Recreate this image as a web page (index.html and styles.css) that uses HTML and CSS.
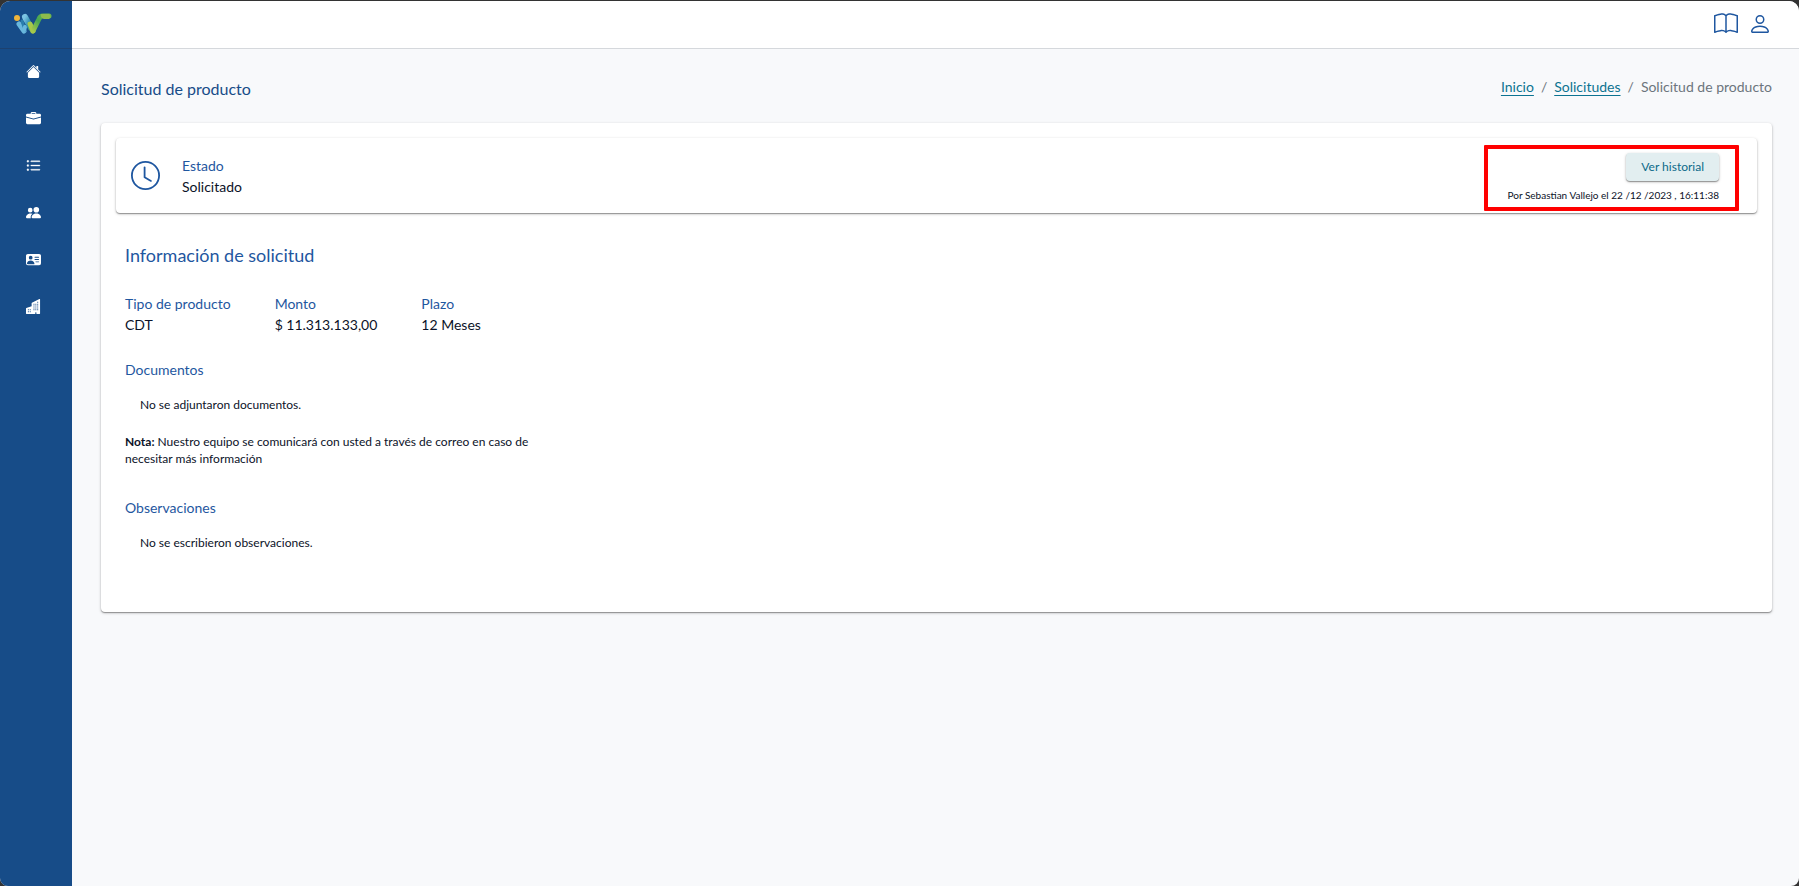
FILE: index.html
```html
<!DOCTYPE html>
<html lang="es">
<head>
	<meta charset="UTF-8">
	<title>Solicitud de producto</title>
	<link rel="stylesheet" href="styles.css">
</head>
<body>
<div class="app">
	<nav class="sidebar">
		<a class="logo" href="#" aria-label="Inicio">
			<svg width="40" height="24" viewBox="0 0 40 24">
				<defs>
					<linearGradient id="azul" x1="0" y1="0" x2="1" y2="1">
						<stop offset="0" stop-color="#7cc4e4"/>
						<stop offset="0.6" stop-color="#2f8fb0"/>
						<stop offset="1" stop-color="#3f9f86"/>
					</linearGradient>
					<linearGradient id="verde" x1="0" y1="1" x2="1" y2="0">
						<stop offset="0" stop-color="#a5c94a"/>
						<stop offset="0.5" stop-color="#45a653"/>
						<stop offset="1" stop-color="#6cb54d"/>
					</linearGradient>
				</defs>
				<path d="M5 12l5 7" stroke="#69b8dd" stroke-width="5" stroke-linecap="round"/>
				<path d="M8 9l3 9" stroke="#2b7fae" stroke-width="3" stroke-linecap="round"/>
				<path d="M10 18l1-3" stroke="#69b8dd" stroke-width="4" stroke-linecap="round"/>
				<path d="M11 5l6 11" stroke="url(#azul)" stroke-width="6" stroke-linecap="round"/>
				<path d="M16 12l3 7" stroke="#a5c94a" stroke-width="5" stroke-linecap="round"/>
				<path d="M19 19l6-12q1-3 4-3h6" fill="none" stroke="url(#verde)" stroke-width="5" stroke-linecap="round" stroke-linejoin="round"/>
				<path d="M30 7q-4-1-3-5h8a3 3 0 0 1 0 5z" fill="#8cbb4c"/>
				<circle cx="3" cy="6" r="3" fill="#efb53c"/>
			</svg>
		</a>
		<ul class="menu">
			<li><a href="#" aria-label="Inicio">
				<svg viewBox="0 0 16 16"><path d="M8 3.293l6 6V13.500a1.500 1.500 0 0 1-1.500 1.500h-9A1.500 1.500 0 0 1 2 13.500V9.293zM13 2.500V6l-2-2V2.500a.5.5 0 0 1 .5-.5h1a.5.5 0 0 1 .5.5z"/><path d="M7.293 1.500a1 1 0 0 1 1.414 0l6.647 6.646a.5.5 0 0 1-.708.708L8 2.207 1.354 8.854a.5.5 0 1 1-.708-.708z"/></svg>
			</a></li>
			<li><a href="#" aria-label="Productos">
				<svg viewBox="0 0 16 16"><path d="M6.500 1A1.500 1.500 0 0 0 5 2.500V3H1.500A1.500 1.500 0 0 0 0 4.500v1.384l7.614 2.030a1.500 1.500 0 0 0 .772 0L16 5.884V4.500A1.500 1.500 0 0 0 14.500 3H11v-.5A1.500 1.500 0 0 0 9.500 1zm0 1h3a.5.5 0 0 1 .5.5V3H6v-.5a.5.5 0 0 1 .5-.5"/><path d="M0 12.500A1.500 1.500 0 0 0 1.500 14h13a1.500 1.500 0 0 0 1.500-1.500V6.850L8.129 8.947a.5.5 0 0 1-.258 0L0 6.850z"/></svg>
			</a></li>
			<li><a href="#" aria-label="Solicitudes">
				<svg viewBox="0 0 16 16"><path d="M5 12.500a.5.5 0 0 1 .5-.5h9a.5.5 0 0 1 0 1h-9a.5.5 0 0 1-.5-.5m0-4.500a.5.5 0 0 1 .5-.5h9a.5.5 0 0 1 0 1h-9A.5.5 0 0 1 5 8m0-4.500a.5.5 0 0 1 .5-.5h9a.5.5 0 0 1 0 1h-9a.5.5 0 0 1-.5-.5m-3 1a1 1 0 1 0 0-2 1 1 0 0 0 0 2M2 9a1 1 0 1 0 0-2 1 1 0 0 0 0 2m0 4.500a1 1 0 1 0 0-2 1 1 0 0 0 0 2" stroke="currentColor" stroke-width="0.4"/></svg>
			</a></li>
			<li><a href="#" aria-label="Clientes">
				<svg viewBox="0 0 16 16"><path d="M7 14s-1 0-1-1 1-4 5-4 5 3 5 4-1 1-1 1zm4-6a3 3 0 1 0 0-6 3 3 0 0 0 0 6m-5.784 6A2.240 2.240 0 0 1 5 13c0-1.355.68-2.750 1.936-3.720A6.300 6.300 0 0 0 5 9c-4 0-5 3-5 4s1 1 1 1zM4.500 8a2.500 2.500 0 1 0 0-5 2.500 2.500 0 0 0 0 5"/></svg>
			</a></li>
			<li><a href="#" aria-label="Perfiles">
				<svg viewBox="0 0 16 16"><path d="M0 4a2 2 0 0 1 2-2h12a2 2 0 0 1 2 2v8a2 2 0 0 1-2 2H2a2 2 0 0 1-2-2zm9 1.500a.5.5 0 0 0 .5.5h4a.5.5 0 0 0 0-1h-4a.5.5 0 0 0-.5.5M9 8a.5.5 0 0 0 .5.5h4a.5.5 0 0 0 0-1h-4A.5.5 0 0 0 9 8m1 2.500a.5.5 0 0 0 .5.5h3a.5.5 0 0 0 0-1h-3a.5.5 0 0 0-.5.5m-1 2C9 10.567 7.210 9 5 9c-2.086 0-3.800 1.398-3.984 3.181A1 1 0 0 0 2 13h6.960q.04-.245.04-.5M7 6a2 2 0 1 0-4 0 2 2 0 0 0 4 0"/></svg>
			</a></li>
			<li><a href="#" aria-label="Empresas">
				<svg viewBox="0 0 16 16"><path d="M15 .5a.5.5 0 0 0-.724-.447l-8 4A.5.5 0 0 0 6 4.500v3.140L.342 9.526A.5.5 0 0 0 0 10v5.500a.5.5 0 0 0 .5.5h9a.5.5 0 0 0 .5-.5V14h1v1.500a.5.5 0 0 0 .5.5h3a.5.5 0 0 0 .5-.5zM2 11h1v1H2zm2 0h1v1H4zm-1 2v1H2v-1zm1 0h1v1H4zm9-10v1h-1V3zM8 5h1v1H8zm1 2v1H8V7zM8 9h1v1H8zm2 0h1v1h-1zm-1 2v1H8v-1zm1 0h1v1h-1zm3-2v1h-1V9zm-1 2h1v1h-1zm-2-4h1v1h-1zm3 0v1h-1V7zm-2-2v1h-1V5zm1 0h1v1h-1z"/></svg>
			</a></li>
		</ul>
	</nav>
	<div class="page">
		<header class="topbar">
			<a href="#" aria-label="Manual">
				<svg viewBox="0 0 16 16"><path d="M1 2.828c.885-.37 2.154-.769 3.388-.893 1.330-.134 2.458.063 3.112.752v9.746c-.935-.53-2.120-.603-3.213-.493-1.180.12-2.370.461-3.287.811zm7.500-.141c.654-.689 1.782-.886 3.112-.752 1.234.124 2.503.523 3.388.893v9.923c-.918-.35-2.107-.692-3.287-.81-1.094-.111-2.278-.039-3.213.492zM8 1.783C7.015.936 5.587.81 4.287.94c-1.514.153-3.042.672-3.994 1.105A.5.5 0 0 0 0 2.500v11a.5.5 0 0 0 .707.455c.882-.4 2.303-.881 3.680-1.020 1.409-.142 2.590.087 3.223.877a.5.5 0 0 0 .78 0c.633-.79 1.814-1.019 3.222-.877 1.378.139 2.800.62 3.681 1.020A.5.5 0 0 0 16 13.500v-11a.5.5 0 0 0-.293-.455c-.952-.433-2.480-.952-3.994-1.105C10.413.809 8.985.936 8 1.783"/></svg>
			</a>
			<a href="#" aria-label="Usuario">
				<svg viewBox="0 0 16 16"><path d="M8 8a3 3 0 1 0 0-6 3 3 0 0 0 0 6m2-3a2 2 0 1 1-4 0 2 2 0 0 1 4 0m4 8c0 1-1 1-1 1H3s-1 0-1-1 1-4 6-4 6 3 6 4m-1-.004c-.001-.246-.154-.986-.832-1.664C11.516 10.680 10.289 10 8 10s-3.516.68-4.168 1.332c-.678.678-.83 1.418-.832 1.664z"/></svg>
			</a>
		</header>
		<main class="content">
			<div class="heading">
				<h1>Solicitud de producto</h1>
				<ol class="breadcrumb">
					<li><a href="#">Inicio</a></li>
					<li><a href="#">Solicitudes</a></li>
					<li>Solicitud de producto</li>
				</ol>
			</div>
			<div class="card">
				<section class="status">
					<svg class="clock" viewBox="0 0 16 16"><path d="M8 3.500a.5.5 0 0 0-1 0V9a.5.5 0 0 0 .252.434l3.500 2a.5.5 0 0 0 .496-.868L8 8.710z"/><path d="M8 16A8 8 0 1 0 8 0a8 8 0 0 0 0 16m7-8A7 7 0 1 1 1 8a7 7 0 0 1 14 0"/></svg>
					<dl class="state">
						<dt>Estado</dt>
						<dd>Solicitado</dd>
					</dl>
					<div class="history">
						<button type="button">Ver historial</button>
						<p>Por Sebastian Vallejo el 22 /12 /2023 , 16:11:38</p>
					</div>
				</section>
				<section class="info">
					<h2>Información de solicitud</h2>
					<div class="fields">
						<dl>
							<dt>Tipo de producto</dt>
							<dd>CDT</dd>
						</dl>
						<dl>
							<dt>Monto</dt>
							<dd>$ 11.313.133,00</dd>
						</dl>
						<dl>
							<dt>Plazo</dt>
							<dd>12 Meses</dd>
						</dl>
					</div>
					<h3>Documentos</h3>
					<p class="empty">No se adjuntaron documentos.</p>
					<p class="note"><b>Nota:</b> Nuestro equipo se comunicará con usted a través de correo en caso de necesitar más información</p>
					<h3>Observaciones</h3>
					<p class="empty">No se escribieron observaciones.</p>
				</section>
			</div>
		</main>
	</div>
</div>
</body>
</html>
```
FILE: styles.css
```css
*{
	box-sizing: border-box;
	margin: 0;
	padding: 0;
}
body{
	background-color: #333;
	font-family: Lato, "Liberation Sans", sans-serif;
	font-size: 14px;
	line-height: 20px;
	color: #0b1228;
	padding-top: 1px;
}
ul,ol{
	list-style: none;
}
svg{
	display: block;
	fill: currentColor;
}
.app{
	display: flex;
	min-height: calc(100vh - 1px);
	border-radius: 10px 10px 8px 8px;
	overflow: hidden;
	background-color: #f8f9fb;
}
/* menu lateral */
.sidebar{
	flex: none;
	width: 72px;
	background-color: #174c88;
	color: #fff;
}
.logo{
	display: flex;
	height: 48px;
	padding: 11px 14px;
	border-bottom: 1px solid #1d416f;
}
.menu a{
	display: flex;
	height: 47px;
	align-items: center;
	padding: 0 0 2px 26px;
	color: #fff;
}
.menu svg{
	width: 15px;
	height: 15px;
}
.page{
	flex: 1;
	min-width: 0;
}
.topbar{
	display: flex;
	justify-content: flex-end;
	gap: 10px;
	height: 48px;
	padding: 11px 27px;
	background-color: #fff;
	border-bottom: 1px solid #d5d8dc;
}
.topbar a{
	color: #1f57a0;
}
.topbar svg{
	width: 24px;
	height: 24px;
}
.content{
	padding: 28px 27px 28px 29px;
}
.heading{
	display: flex;
	justify-content: space-between;
	margin-bottom: 22px;
}
h1,h2,h3{
	font-weight: 400;
}
h1{
	font-size: 16px;
	line-height: 24px;
	color: #174c88;
}
h2{
	font-size: 18px;
	line-height: 24px;
}
h3{
	font-size: 14px;
	line-height: 20px;
}
h2,h3,dt{
	color: #1f57a0;
}
dt,dd{
	line-height: 21px;
}
.breadcrumb{
	display: flex;
	color: #6c757d;
}
.breadcrumb li + li::before{
	content: "/";
	padding: 0 7px;
}
.breadcrumb a{
	color: #0c7391;
	text-underline-offset: 3px;
	text-decoration-thickness: 1px;
}
.card,.status{
	background-color: #fff;
	border-radius: 4px;
	box-shadow: 0 1px 3px rgba(0,0,0,0.25), 0 1px 1px rgba(0,0,0,0.3);
}
.card{
	padding: 15px 15px 41px;
}
.status{
	display: flex;
	align-items: center;
	height: 75px;
	padding: 0 18px 0 15px;
}
.clock{
	width: 29px;
	height: 29px;
	margin-right: 22px;
	color: #1f57a0;
}
/* recuadro del historial */
.history{
	display: flex;
	flex-direction: column;
	align-items: flex-end;
	align-self: flex-end;
	height: 66px;
	margin: 0 0 2px auto;
	padding: 4px 16px 0 20px;
	border: 4px solid #f00;
	border-radius: 1px;
}
.history button{
	height: 28px;
	padding: 0 15px;
	border: 0;
	border-radius: 4px;
	background-color: #e2eef0;
	box-shadow: 0 1px 3px rgba(0,0,0,0.25), 0 1px 1px rgba(0,0,0,0.3);
	font: inherit;
	font-size: 12px;
	color: #0c6a8a;
}
.history p{
	margin-top: 6px;
	font-size: 10px;
	line-height: 17px;
}
.info{
	padding: 30px 9px 0;
}
.fields{
	display: flex;
	gap: 44px;
	margin: 26px 0 25px;
}
.empty,.note{
	font-size: 12px;
	line-height: 17px;
}
.empty{
	padding: 16px 15px 20px;
}
.note{
	max-width: 430px;
	margin-bottom: 31px;
}
```
